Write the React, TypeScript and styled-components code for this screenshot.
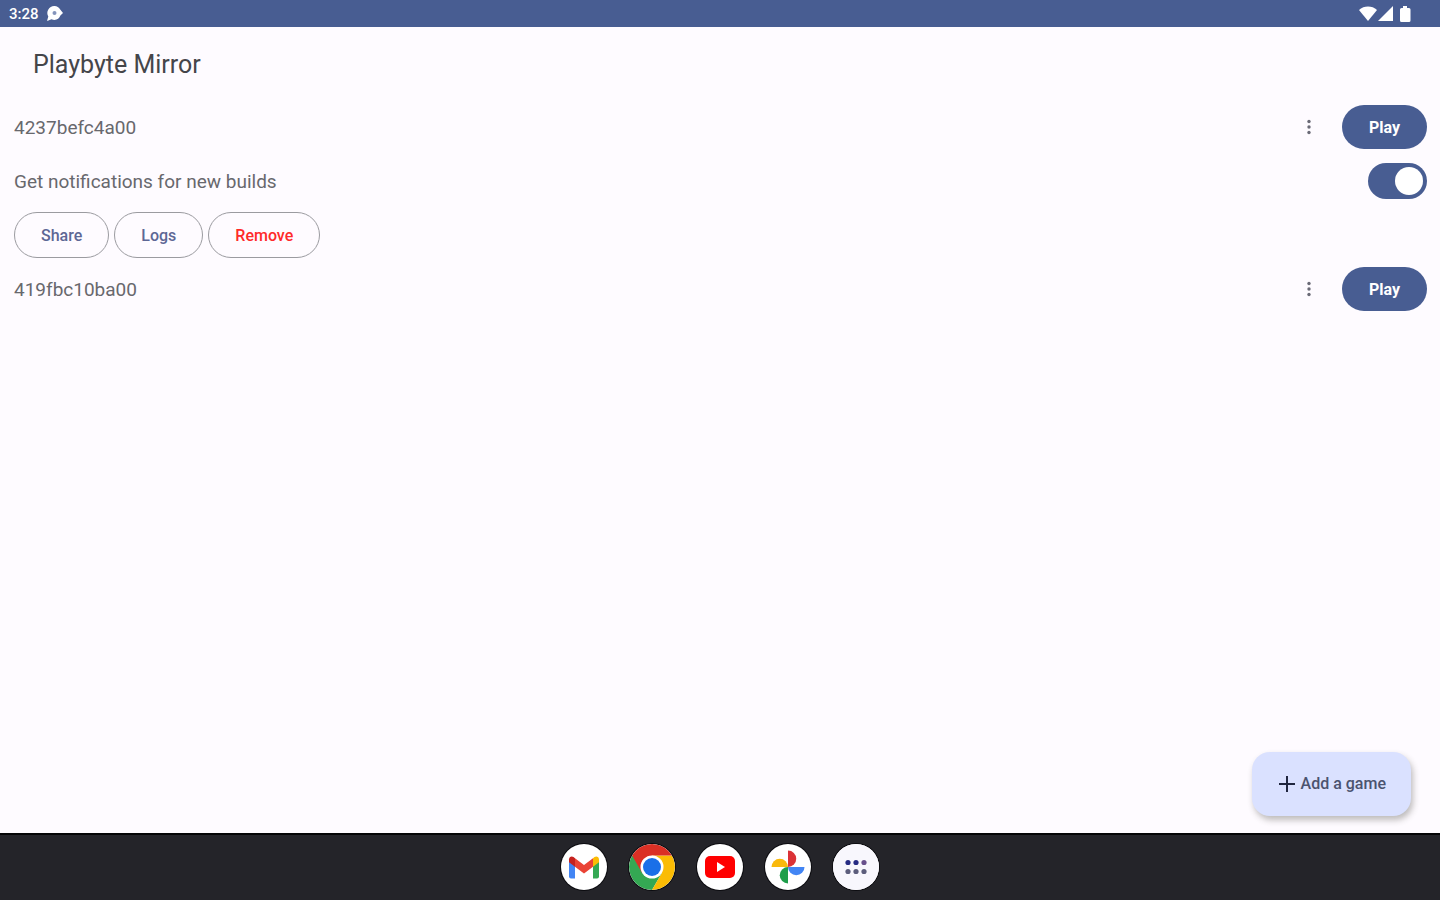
import React, { useState } from "react";
import styled, { createGlobalStyle } from "styled-components";

const GlobalStyle = createGlobalStyle`
  *, *::before, *::after { box-sizing: border-box; }
  body {
    margin: 0;
    background: #fefbff;
    color: #1b1b1f;
    font-family: Roboto, "Liberation Sans", sans-serif;
  }
  button { font-family: inherit; cursor: pointer; }
`;

const Screen = styled.div`
  display: flex;
  flex-direction: column;
  min-height: 100vh;
`;

const StatusBar = styled.header`
  display: flex;
  align-items: center;
  justify-content: space-between;
  height: 27px;
  padding: 0 28px 0 9px;
  background: #485d92;
  color: #fff;
`;

const StatusGroup = styled.div<{ $gap: number }>`
  display: flex;
  align-items: center;
  gap: ${(p) => p.$gap}px;
  svg { display: block; }
`;

const Clock = styled.time`
  font-size: 15px;
  font-weight: 500;
  line-height: 20px;
`;

const Title = styled.h1`
  margin: 0;
  padding: 23px 33px 20px;
  font-size: 25px;
  font-weight: 400;
  line-height: 30px;
  color: #45454a;
`;

const Main = styled.main`
  display: flex;
  flex-direction: column;
  flex: 1;
`;

const Row = styled.div`
  display: flex;
  align-items: center;
  min-height: 54px;
  padding: 0 13px 0 14px;
`;

const RowText = styled.span`
  flex: 1;
  padding-top: 2px;
  font-size: 19px;
  line-height: 24px;
  color: #68686d;
`;

const MoreButton = styled.button`
  display: grid;
  place-items: center;
  width: 48px;
  height: 48px;
  margin-right: 9px;
  padding: 0;
  border: 0;
  border-radius: 50%;
  background: none;
  color: #6a6a76;
`;

const PlayButton = styled.button`
  height: 44px;
  padding: 2px 27px 0;
  border: 0;
  border-radius: 22px;
  background: #485d92;
  color: #fff;
  font-size: 16px;
  font-weight: 700;
  line-height: 20px;
`;

const Toggle = styled.input`
  appearance: none;
  display: flex;
  align-items: center;
  width: 59px;
  height: 36px;
  margin: 0;
  padding: 0 4px;
  border-radius: 18px;
  background: #485d92;
  cursor: pointer;
  &::before {
    content: "";
    width: 28px;
    height: 28px;
    border-radius: 50%;
    background: #fff;
  }
  &:checked { justify-content: flex-end; }
  &:not(:checked) { background: #8d90a0; }
`;

const Actions = styled(Row)`
  gap: 5px;
`;

const OutlineButton = styled.button<{ $danger?: boolean }>`
  height: 46px;
  padding: 2px 26px 0;
  border: 1px solid #9b9ba0;
  border-radius: 23px;
  background: transparent;
  color: ${(p) => (p.$danger ? "#ff2a2a" : "#5d6795")};
  font-size: 16px;
  font-weight: 500;
  line-height: 20px;
`;

const AddButton = styled.button`
  display: flex;
  align-items: center;
  gap: 6px;
  align-self: flex-end;
  height: 64px;
  margin: auto 29px 17px 0;
  padding: 0 25px 0 27px;
  border: 0;
  border-radius: 18px;
  background: #dae1ff;
  box-shadow: 2px 4px 6px rgba(40, 40, 30, 0.3);
  color: #4b536f;
  font-size: 16px;
  font-weight: 500;
  line-height: 20px;
`;

const Dock = styled.nav`
  display: flex;
  align-items: center;
  justify-content: center;
  gap: 22px;
  height: 67px;
  padding-bottom: 2px;
  border-top: 2px solid #050506;
  background: #242429;
`;

const AppButton = styled.button`
  width: 46px;
  height: 46px;
  padding: 0;
  border: 0;
  border-radius: 50%;
  background: #fff;
  overflow: hidden;
  box-shadow: 0 0 0 1px #0c0c10;
  svg { display: block; }
`;

const icon = { width: 46, height: 46, viewBox: "0 0 46 46", "aria-hidden": true };

const GmailIcon = () => (
  <svg {...icon}>
    <path fill="#4285f4" d="M8 16.5l6 4.5v13.5h-4a2 2 0 0 1-2-2z" />
    <path fill="#34a853" d="M32 21l6-4.5v16a2 2 0 0 1-2 2h-4z" />
    <path fill="#fbbc04" d="M32 14.3l1.5-1.2c2-1.5 4.5 0 4.5 2.3v2.8l-6 4.6z" />
    <path fill="#ea4335" d="M14 14.3l9 6.8 9-6.8v8.5l-9 6.8-9-6.8z" />
    <path fill="#c5221f" d="M8 15.4c0-2.3 2.5-3.8 4.5-2.3l1.5 1.2v8.5l-6-4.6z" />
  </svg>
);

const ChromeIcon = () => (
  <svg {...icon}>
    <path fill="#34a853" d="M23 23L3.1 11.5A23 23 0 0 0 23 46l10-17.3z" />
    <path fill="#fbbc04" d="M23 46A23 23 0 0 0 42.9 11.5H23l10 17.3z" />
    <path fill="#db3025" d="M3.1 11.5a23 23 0 0 1 39.8 0H23l-10 17.2z" />
    <circle cx="23" cy="23" r="11.5" fill="#fff" />
    <circle cx="23" cy="23" r="9" fill="#1a6fe8" />
  </svg>
);

const YouTubeIcon = () => (
  <svg {...icon}>
    <rect x="8" y="12" width="30" height="22" rx="5" fill="#f00" />
    <path fill="#fff" d="M20 18l8 5-8 5z" />
  </svg>
);

const PhotosIcon = () => (
  <svg {...icon}>
    <path fill="#db3236" d="M23 23V6.5a8.25 8.25 0 0 1 0 16.5z" />
    <path fill="#4285f4" d="M23 23h16.5a8.25 8.25 0 0 1-16.5 0z" />
    <path fill="#1e9e4a" d="M23 23v16.5a8.25 8.25 0 0 1 0-16.5z" />
    <path fill="#f9b90d" d="M23 23H6.5a8.25 8.25 0 0 1 16.5 0z" />
  </svg>
);

const AllAppsIcon = () => (
  <svg {...icon}>
    <rect width="46" height="46" fill="#f8f7fd" />
    {[15, 23, 31].map((x) => (
      <g key={x}>
        <circle cx={x} cy="18.5" r="2.6" fill={x === 31 ? "#68508c" : "#262b83"} />
        <circle cx={x} cy="27.5" r="2.6" fill="#5c5d7c" />
      </g>
    ))}
  </svg>
);

const apps = [
  { name: "Gmail", Icon: GmailIcon },
  { name: "Chrome", Icon: ChromeIcon },
  { name: "YouTube", Icon: YouTubeIcon },
  { name: "Photos", Icon: PhotosIcon },
  { name: "All apps", Icon: AllAppsIcon },
];

const GameRow = ({ id }: { id: string }) => (
  <Row>
    <RowText>{id}</RowText>
    <MoreButton aria-label={`More options for ${id}`}>
      <svg width="6" height="16" viewBox="0 0 6 16" fill="currentColor" aria-hidden>
        <circle cx="3" cy="2.5" r="1.7" />
        <circle cx="3" cy="8" r="1.7" />
        <circle cx="3" cy="13.5" r="1.7" />
      </svg>
    </MoreButton>
    <PlayButton>Play</PlayButton>
  </Row>
);

export default function App() {
  const [notify, setNotify] = useState(true);
  return (
    <Screen>
      <GlobalStyle />
      <StatusBar>
        <StatusGroup $gap={8}>
          <Clock>3:28</Clock>
          <svg width="16" height="15" viewBox="0 0 16 15" fill="#fff" aria-hidden>
            <path d="M7.5 0C10 0 12 1.3 13 3.3L16 7l-2.6 2.6C12.5 12.3 10.3 14 7.5 14c-1 0-2-.2-3-.7L0 15l1.3-4.5A7 7 0 0 1 7.5 0z" />
            <circle cx="7.5" cy="7" r="2" fill="#8494bb" />
          </svg>
        </StatusGroup>
        <StatusGroup $gap={1}>
          <svg width="18" height="15" viewBox="0 0 18 15" fill="#fff" aria-hidden>
            <path d="M0 4C5-.6 13-.6 18 4L9 15z" />
          </svg>
          <svg width="15" height="15" viewBox="0 0 15 15" fill="#fff" aria-hidden>
            <path d="M15 0v15H0z" />
          </svg>
          <svg width="18" height="16" viewBox="0 0 18 16" fill="#fff" aria-hidden>
            <path d="M9 0h4v2h2q1.5 0 1.5 1.5v11Q16.500 16 15 16H7.5Q6 16 6 14.5v-11Q6 2 7.5 2H9z" />
          </svg>
        </StatusGroup>
      </StatusBar>
      <Title>Playbyte Mirror</Title>
      <Main>
        <GameRow id="4237befc4a00" />
        <Row>
          <RowText as="label" htmlFor="notify">
            Get notifications for new builds
          </RowText>
          <Toggle
            id="notify"
            type="checkbox"
            role="switch"
            checked={notify}
            onChange={(e) => setNotify(e.target.checked)}
          />
        </Row>
        <Actions>
          <OutlineButton>Share</OutlineButton>
          <OutlineButton>Logs</OutlineButton>
          <OutlineButton $danger>Remove</OutlineButton>
        </Actions>
        <GameRow id="419fbc10ba00" />
        <AddButton>
          <svg width="16" height="16" viewBox="0 0 16 16" stroke="#20263f" strokeWidth="2" aria-hidden>
            <path d="M8 0v16M0 8h16" />
          </svg>
          Add a game
        </AddButton>
      </Main>
      <Dock aria-label="Apps">
        {apps.map(({ name, Icon }) => (
          <AppButton key={name} aria-label={name}>
            <Icon />
          </AppButton>
        ))}
      </Dock>
    </Screen>
  );
}
